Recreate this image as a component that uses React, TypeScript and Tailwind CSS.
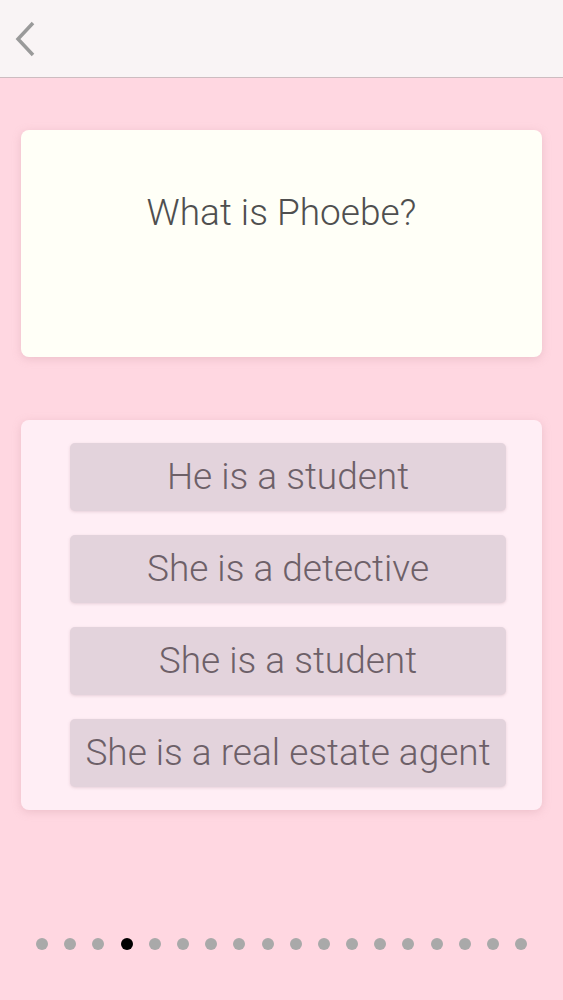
import React from "react";

const answers = [
  "He is a student",
  "She is a detective",
  "She is a student",
  "She is a real estate agent",
];

const TOTAL = 18;
const ACTIVE = 3;

export default function App() {
  return (
    <div
      className="flex h-[1000px] w-full flex-col bg-[#ffd7e1]"
      style={{ fontFamily: "Roboto, 'Liberation Sans', sans-serif" }}
    >
      <header className="flex h-[78px] shrink-0 items-center border-b border-[#cdbcc0] bg-[#f9f4f5] px-[13px]">
        <button type="button" className="text-[#9a9a9a]">
          <svg width="24" height="38" viewBox="0 0 24 38" fill="none">
            <path d="M20 3 L5 19 L20 35" stroke="currentColor" strokeWidth="3.5" />
          </svg>
        </button>
      </header>

      <main className="flex flex-col px-[21px] pt-[52px]">
        <div className="flex h-[227px] justify-center rounded-lg bg-[#fffff7] pt-[64px] shadow-[0_2px_8px_rgba(200,150,160,0.35)]">
          <p className="text-[37px] font-light leading-none text-[#4f4f4f]">What is Phoebe?</p>
        </div>

        <div className="mt-[63px] flex flex-col gap-[24px] rounded-lg bg-[#ffeef5] pb-[23px] pl-[49px] pr-[36px] pt-[23px] shadow-[0_2px_8px_rgba(200,150,160,0.35)]">
          {answers.map((a) => (
            <button
              key={a}
              type="button"
              className="flex h-[68px] items-center justify-center rounded-[5px] bg-[#e3d3dc] text-[37px] font-light text-[#6d6068] shadow-[0_1px_3px_rgba(160,120,135,0.25)]"
            >
              {a}
            </button>
          ))}
        </div>
      </main>

      <div className="mt-auto mb-[50px] flex items-center gap-[16.2px] pl-[36px]">
        {Array.from({ length: TOTAL }).map((_, i) => (
          <span
            key={i}
            className={`h-[12px] w-[12px] rounded-full ${i === ACTIVE ? "bg-black" : "bg-[#a9a9a9]"}`}
          />
        ))}
      </div>
    </div>
  );
}
